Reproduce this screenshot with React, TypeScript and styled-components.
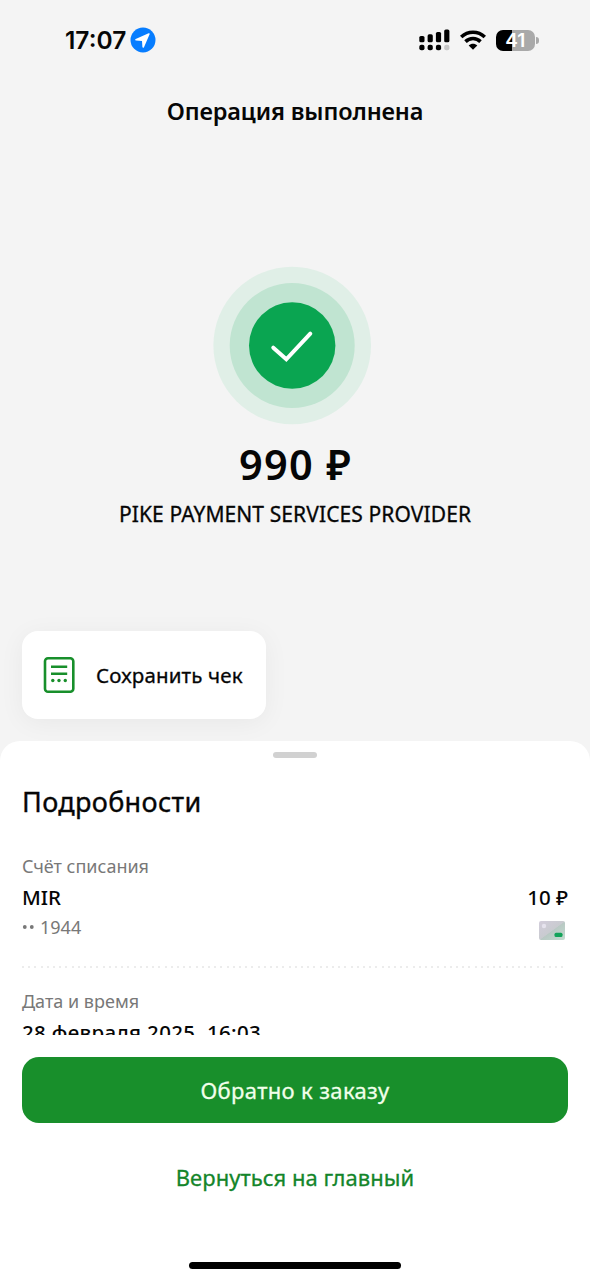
import React from "react";
import styled, { createGlobalStyle } from "styled-components";

const GlobalStyle = createGlobalStyle`
  * { box-sizing: border-box; }
  body {
    margin: 0;
    background: #f4f4f4;
    font-family: "Noto Sans", "Open Sans", sans-serif;
    color: #060606;
  }
  button { font: inherit; color: inherit; border: 0; background: none; padding: 0; }
`;

const Screen = styled.main`
  width: 590px;
  height: 1280px;
  display: flex;
  flex-direction: column;
  overflow: hidden;
  background: #f4f4f4;
`;

const StatusBar = styled.header`
  height: 80px;
  flex: none;
  display: flex;
  align-items: center;
  padding: 0 51.5px 0 65px;
`;

const Clock = styled.span`
  width: 65px;
  font: 600 24.5px/30px Inter, sans-serif;
  letter-spacing: 0;
  white-space: nowrap;
`;

const StatusIcons = styled.div`
  margin-left: auto;
  display: flex;
  align-items: center;
  gap: 10px;
`;

const Battery = styled.div`
  display: flex;
  align-items: center;
  gap: 1px;
`;

const BatteryBody = styled.div`
  width: 39.5px;
  height: 21px;
  border-radius: 7px;
  background: linear-gradient(90deg, #000 41%, #a9a9a9 41%);
  color: #fff;
  text-align: center;
  font: 600 19px/21px Inter, sans-serif;
`;

const BatteryTip = styled.div`
  width: 2.5px;
  height: 7px;
  border-radius: 0 3px 3px 0;
  background: #a9a9a9;
`;

const Title = styled.h1`
  margin: 0;
  height: 62px;
  flex: none;
  text-align: center;
  font-size: 23.5px;
  line-height: 62px;
  font-weight: 600;
  letter-spacing: -0.12px;
`;

const Result = styled.section`
  height: 489px;
  flex: none;
  padding-top: 123px;
  display: flex;
  flex-direction: column;
  align-items: center;
`;

const SuccessMark = styled.svg`
  display: block;
  margin-right: 6px;
`;

const Amount = styled.div`
  margin-top: 14px;
  font-size: 41.5px;
  line-height: 50px;
  font-weight: 600;
  letter-spacing: 1.3px;
  margin-right: -1px;
`;

const Merchant = styled.div`
  margin-top: 10px;
  font-size: 21px;
  line-height: 30px;
  font-weight: 400;
  letter-spacing: 0.1px;
  -webkit-text-stroke: 0.3px currentColor;
`;

const ReceiptButton = styled.button`
  flex: none;
  align-self: flex-start;
  margin-left: 22px;
  width: 244px;
  height: 88px;
  padding-left: 21px;
  display: flex;
  align-items: center;
  gap: 21px;
  border-radius: 16px;
  background: #fff;
  box-shadow: 0 4px 26px rgba(0, 0, 0, 0.05);
`;

const ReceiptLabel = styled.span`
  font-size: 20.5px;
  line-height: 30px;
  font-weight: 400;
  letter-spacing: 0.15px;
  -webkit-text-stroke: 0.3px currentColor;
  white-space: nowrap;
`;

const Sheet = styled.section`
  flex: 1;
  min-height: 0;
  margin-top: 22px;
  display: flex;
  flex-direction: column;
  background: #fff;
  border-radius: 20px 20px 0 0;
`;

const Handle = styled.div`
  flex: none;
  width: 44px;
  height: 6px;
  margin: 10.5px auto 0;
  border-radius: 3px;
  background: #d1d1d1;
`;

const Details = styled.div`
  flex: none;
  height: 277.5px;
  padding: 26px 22px 0;
  overflow: hidden;
`;

const Heading = styled.h2`
  margin: 0 0 33px;
  font-size: 27px;
  line-height: 36px;
  font-weight: 400;
  letter-spacing: 0.35px;
  -webkit-text-stroke: 0.35px currentColor;
`;

const Caption = styled.div`
  font-size: 18px;
  line-height: 26px;
  color: #787878;
  white-space: nowrap;
`;

const Row = styled.div<{ $top?: number }>`
  display: flex;
  align-items: center;
  justify-content: space-between;
  margin-top: ${({ $top = 0 }) => $top}px;
`;

const Value = styled.div`
  font-size: 20.5px;
  line-height: 28px;
  font-weight: 500;
  white-space: nowrap;
`;

const DateValue = styled(Value)`
  margin-top: 4px;
  letter-spacing: 0.33px;
`;

const MaskDots = styled.svg`
  margin-right: 5px;
  vertical-align: 5px;
`;

const CardThumb = styled.svg`
  margin: 7px 3px 0 0;
`;

const Divider = styled.div`
  height: 2px;
  margin: 26px 0 20px;
  background: repeating-linear-gradient(90deg, #ececec 0 2px, transparent 2px 6.2px);
`;

const PrimaryButton = styled.button`
  flex: none;
  height: 66px;
  margin: 22px 22px 0;
  border-radius: 17px;
  background: #188f2b;
  color: #f1ffea;
  font-size: 22px;
  line-height: 65px;
  font-weight: 400;
  letter-spacing: 0.35px;
  -webkit-text-stroke: 0.3px currentColor;
`;

const LinkButton = styled.button`
  flex: none;
  height: 66px;
  margin: 21px 22px 0;
  color: #13852a;
  font-size: 22px;
  line-height: 66px;
  font-weight: 400;
  letter-spacing: 0.05px;
  -webkit-text-stroke: 0.3px currentColor;
`;

const HomeIndicator = styled.div`
  flex: none;
  width: 212px;
  height: 7px;
  margin: auto auto 11px;
  border-radius: 4px;
  background: #000;
`;

const LocationIcon = () => (
  <svg width="26" height="26" viewBox="0 0 26 26">
    <circle cx="13" cy="13" r="12.5" fill="#077dff" />
    <path
      d="M18.6 6.3 5.7 12c-.9.4-.7 1.5.3 1.6l6 .4.4 6c.1 1 1.2 1.1 1.6.2L19.6 7.3c.3-.6-.3-1.3-1-1Z"
      fill="#fff"
    />
  </svg>
);

const SignalIcon = () => (
  <svg width="31" height="22" viewBox="0 0 31 22">
    <rect x="0.3" y="7" width="5.2" height="6.3" rx="1.6" />
    <rect x="8.6" y="5.3" width="5.2" height="8" rx="1.6" />
    <rect x="16.9" y="3" width="5.2" height="10.3" rx="1.6" />
    <rect x="25.2" y="0.4" width="5.2" height="12.9" rx="1.6" />
    <rect x="0.3" y="15.8" width="5.2" height="5.4" rx="2" />
    <rect x="8.6" y="15.8" width="5.2" height="5.4" rx="2" />
    <rect x="16.9" y="15.8" width="5.2" height="5.4" rx="2" />
    <rect x="25.2" y="15.8" width="5.2" height="5.4" rx="2" fill="#c6c6c6" />
  </svg>
);

const WifiIcon = () => (
  <svg width="26" height="20" viewBox="0 0 26 20">
    <g fill="none" stroke="#000" strokeWidth="3.6">
      <path d="M1.2 7C7.8 .6 18.2 .6 24.8 7" />
      <path d="M5.5 11.6C9.7 7.5 16.3 7.5 20.5 11.6" />
    </g>
    <path d="M13 19.7 8.7 15.4C11.2 13.1 14.8 13.1 17.3 15.4Z" />
  </svg>
);

const ReceiptIcon = () => (
  <svg width="32" height="36" viewBox="0 0 32 36" fill="none" stroke="#188f2b">
    <rect x="2" y="1.3" width="28.3" height="33.4" rx="3" strokeWidth="2.6" />
    <path d="M8 9.7H24.2M8 16.7H24.2" strokeWidth="2.6" />
    <g fill="#188f2b" stroke="none">
      <circle cx="9.8" cy="23.5" r="1.7" />
      <circle cx="16" cy="23.5" r="1.7" />
      <circle cx="22.3" cy="23.5" r="1.7" />
    </g>
  </svg>
);

export default function App() {
  return (
    <>
      <GlobalStyle />
      <Screen>
        <StatusBar>
          <Clock>17:07</Clock>
          <LocationIcon />
          <StatusIcons>
            <SignalIcon />
            <WifiIcon />
            <Battery>
              <BatteryBody>41</BatteryBody>
              <BatteryTip />
            </Battery>
          </StatusIcons>
        </StatusBar>
        <Title>Операция выполнена</Title>
        <Result>
          <SuccessMark width="160" height="160" viewBox="0 0 160 160">
            <circle cx="80.2" cy="80.5" r="78.8" fill="#e0efe7" />
            <circle cx="80.2" cy="80.5" r="62.5" fill="#c0e4d1" />
            <circle cx="80.2" cy="80.5" r="43.2" fill="#0aa551" />
            <path
              d="M61.3 82.7 74.3 94.3 98.3 68.7"
              fill="none"
              stroke="#fff"
              strokeWidth="4"
              strokeLinecap="round"
            />
          </SuccessMark>
          <Amount>990 ₽</Amount>
          <Merchant>PIKE PAYMENT SERVICES PROVIDER</Merchant>
        </Result>
        <ReceiptButton>
          <ReceiptIcon />
          <ReceiptLabel>Сохранить чек</ReceiptLabel>
        </ReceiptButton>
        <Sheet>
          <Handle />
          <Details>
            <Heading>Подробности</Heading>
            <Caption>Счёт списания</Caption>
            <Row $top={4}>
              <Value>MIR</Value>
              <Value>10 ₽</Value>
            </Row>
            <Row $top={3}>
              <Caption>
                <MaskDots width="13" height="4" viewBox="0 0 13 4" fill="#787878">
                  <circle cx="2.8" cy="2" r="1.9" />
                  <circle cx="9.8" cy="2" r="1.9" />
                </MaskDots>
                1944
              </Caption>
              <CardThumb width="26" height="19" viewBox="0 0 26 19">
                <defs>
                  <linearGradient id="card" x1="0" y1="0" x2="1" y2="1">
                    <stop offset="0" stopColor="#d3cddb" />
                    <stop offset="0.5" stopColor="#c9cbd0" />
                    <stop offset="0.52" stopColor="#b9c9c4" />
                    <stop offset="1" stopColor="#c3dccf" />
                  </linearGradient>
                </defs>
                <rect width="26" height="19" rx="2" fill="url(#card)" />
                <circle cx="5" cy="5" r="2.2" fill="#e6e3ee" />
                <rect x="15.5" y="11.7" width="8" height="4.3" rx="1.5" fill="#13a35a" />
              </CardThumb>
            </Row>
            <Divider />
            <Caption>Дата и время</Caption>
            <DateValue>28 февраля 2025, 16:03</DateValue>
          </Details>
          <PrimaryButton>Обратно к заказу</PrimaryButton>
          <LinkButton>Вернуться на главный</LinkButton>
          <HomeIndicator />
        </Sheet>
      </Screen>
    </>
  );
}
